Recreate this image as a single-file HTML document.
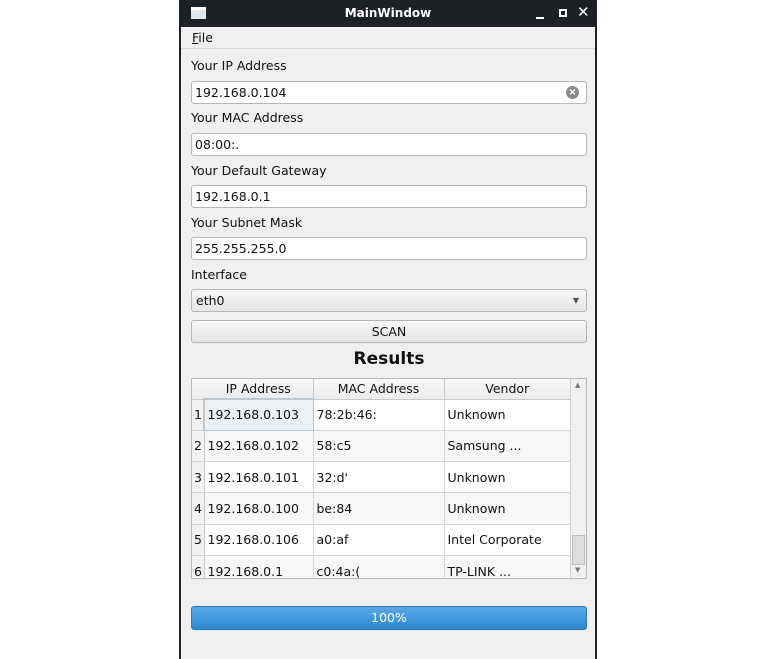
<html><head><style>
body{margin:0;width:776px;height:659px;background:#fff;position:relative;font-family:"DejaVu Sans","Liberation Sans",sans-serif;font-size:12.5px;color:#111;overflow:hidden}
.a{position:absolute}
.win{left:179px;top:0;width:418px;height:659px;background:#efefef;border-left:2px solid #1d2126;border-right:2px solid #1d2126;box-sizing:border-box}
.tb{left:179px;top:0;width:418px;height:27px;background:#1d2126;color:#fff;font-weight:bold;font-size:12px}
.lbl{left:191px}
.f{left:191px;width:396px;height:23px;background:#fff;border:1px solid #b8b8b8;border-radius:3px;box-sizing:border-box;padding-left:3px;line-height:21px}
.btn{left:191px;width:396px;height:23px;background:linear-gradient(#f6f6f6,#e6e6e6);border:1px solid #b4b4b4;border-radius:3px;box-sizing:border-box;text-align:center;line-height:21px}
table{border-collapse:collapse;font-size:12.5px;table-layout:fixed}
td{border-right:1px solid #d6d6d6;border-bottom:1px solid #d6d6d6;height:31.3px;padding:0 3px;white-space:nowrap;overflow:hidden}
td.n{background:#f2f2f2;padding:0 0 0 2px;border-right:1px solid #c8c8c8}
th{font-weight:normal;height:20px;background:linear-gradient(#f8f8f8,#ececec);border-right:1px solid #c8c8c8;border-bottom:1px solid #c8c8c8}
</style></head><body>
<div class="a win"></div>
<div class="a tb"><div class="a" style="left:12px;top:7px;width:15px;height:12px;background:#dfe6ee;border-top:3px solid #fff;box-sizing:border-box"></div><div class="a" style="left:0;width:418px;top:6px;text-align:center">MainWindow</div>
<div class="a" style="left:357px;top:17px;width:8px;height:2px;background:#fff"></div>
<div class="a" style="left:380px;top:9px;width:8px;height:8px;border:2px solid #fff;box-sizing:border-box"></div>
<div class="a" style="left:398px;top:3px;font-size:15px">✕</div></div>
<div class="a" style="left:192px;top:30px"><u>F</u>ile</div>
<div class="a" style="left:181px;top:48px;width:414px;height:1px;background:#d8d8d8"></div>
<div class="a lbl" style="top:58px">Your IP Address</div>
<div class="a f" style="top:81px">192.168.0.104<div class="a" style="right:7px;top:4px;width:13px;height:13px;border-radius:50%;background:#8a8a8a;color:#fff;font-size:10px;line-height:13px;text-align:center;font-weight:bold">×</div></div>
<div class="a lbl" style="top:110px">Your MAC Address</div>
<div class="a f" style="top:133px">08:00:.</div>
<div class="a lbl" style="top:163px">Your Default Gateway</div>
<div class="a f" style="top:185px">192.168.0.1</div>
<div class="a lbl" style="top:215px">Your Subnet Mask</div>
<div class="a f" style="top:237px">255.255.255.0</div>
<div class="a lbl" style="top:267px">Interface</div>
<div class="a btn" style="top:289px;text-align:left;padding-left:4px">eth0<span class="a" style="right:7px;top:0;font-size:8px;color:#555">▼</span></div>
<div class="a btn" style="top:320px">SCAN</div>
<div class="a" style="left:191px;width:396px;top:349px;text-align:center;font-weight:bold;font-size:17px">Results</div>
<div class="a" style="left:191px;top:378px;width:396px;height:201px;border:1px solid #b8b8b8;box-sizing:border-box;background:#fff;overflow:hidden">
<table style="width:379px">
<colgroup><col style="width:12px"><col style="width:109px"><col style="width:131px"><col></colgroup>
<tr><th style="border-right:none"></th><th>IP Address</th><th>MAC Address</th><th>Vendor</th></tr>
<tr><td class="n">1</td><td style="background:#e8f0f8;outline:1px solid #a9c8e4">192.168.0.103</td><td>78:2b:46:</td><td>Unknown</td></tr>
<tr style="background:#f7f7f7"><td class="n">2</td><td>192.168.0.102</td><td>58:c5</td><td>Samsung ...</td></tr>
<tr><td class="n">3</td><td>192.168.0.101</td><td>32:d'</td><td>Unknown</td></tr>
<tr style="background:#f7f7f7"><td class="n">4</td><td>192.168.0.100</td><td>be:84</td><td>Unknown</td></tr>
<tr><td class="n">5</td><td>192.168.0.106</td><td>a0:af</td><td>Intel Corporate</td></tr>
<tr style="background:#f7f7f7"><td class="n">6</td><td>192.168.0.1</td><td>c0:4a:(</td><td>TP-LINK ...</td></tr>
</table>
<div class="a" style="right:0;top:0;width:15px;height:199px;background:#f0f0f0;border-left:1px solid #d0d0d0">
<div class="a" style="left:4px;top:2px;font-size:7px;color:#777">▲</div>
<div class="a" style="left:1px;top:156px;width:13px;height:30px;background:#ddd;border:1px solid #c0c0c0;box-sizing:border-box"></div>
<div class="a" style="left:4px;top:187px;font-size:7px;color:#777">▼</div></div>
</div>
<div class="a" style="left:191px;top:606px;width:396px;height:24px;border:1px solid #2d7ab8;border-radius:3px;box-sizing:border-box;background:linear-gradient(#58a8e6,#2f88d0);color:#fff;text-align:center;line-height:22px">100%</div>
</body></html>
